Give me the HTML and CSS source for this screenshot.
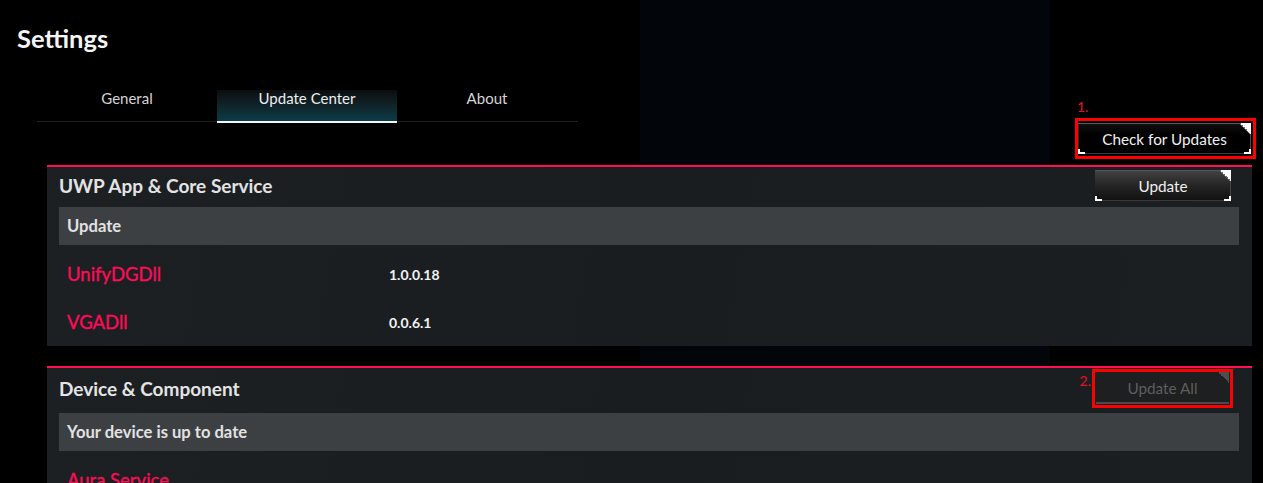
FILE: index.html
```html
<!DOCTYPE html>
<html lang="en">
<head>
<meta charset="utf-8">
<title>Settings</title>
<link rel="stylesheet" href="styles.css">
</head>
<body>
<div class="app">
  <header class="top">
    <div class="top-left">
      <h1 class="title">Settings</h1>
      <nav class="tabs">
        <div class="tab">General</div>
        <div class="tab active">Update Center</div>
        <div class="tab">About</div>
      </nav>
    </div>
    <div class="mark mark-1">
      <span class="mark-num">1.</span>
      <button class="btn btn-check">Check for Updates</button>
    </div>
  </header>

  <section class="panel">
    <div class="panel-head">
      <h2 class="panel-title">UWP App &amp; Core Service</h2>
      <button class="btn btn-grad">Update</button>
    </div>
    <div class="table-head">Update</div>
    <div class="rows">
      <div class="row"><span class="name">UnifyDGDll</span><span class="ver">1.0.0.18</span></div>
      <div class="row"><span class="name">VGADll</span><span class="ver">0.0.6.1</span></div>
    </div>
  </section>

  <section class="panel panel-2">
    <div class="panel-head panel-head-2">
      <h2 class="panel-title">Device &amp; Component</h2>
      <div class="mark mark-2">
        <span class="mark-num">2.</span>
        <button class="btn btn-disabled">Update All</button>
      </div>
    </div>
    <div class="table-head">Your device is up to date</div>
    <div class="rows">
      <div class="row"><span class="name">Aura Service</span><span class="ver"></span></div>
    </div>
  </section>
</div>
</body>
</html>
```

FILE: styles.css
```css
* { box-sizing: border-box; }
html, body { margin: 0; padding: 0; }
body {
  width: 1263px;
  height: 483px;
  overflow: hidden;
  background: linear-gradient(90deg, #000 0, #000 640px, #02060a 640px, #02060a 1050px, #000 1050px);
  font-family: "Lato", "Segoe UI", sans-serif;
  color: #e6e6e6;
}
.app { width: 1263px; }

.top {
  height: 165px;
  display: flex;
  justify-content: space-between;
  align-items: flex-end;
}
.top-left { padding-left: 17px; padding-top: 24px; align-self: flex-start; }
.title {
  margin: 0;
  font-size: 25.5px;
  line-height: 29px;
  font-weight: 700;
  color: #f4f4f4;
}
.tabs {
  margin-top: 37px;
  margin-left: 20px;
  width: 541px;
  height: 32px;
  display: flex;
  border-bottom: 1px solid #1e2124;
}
.tab {
  width: 180px;
  height: 31px;
  text-align: center;
  font-size: 15px;
  line-height: 17px;
  color: #d4d4d4;
}
.tab.active {
  color: #eeeeee;
  background: linear-gradient(to bottom, #0c0d0e 0%, #10262c 55%, #0a3d48 100%);
  border-bottom: 2px solid #f4f4f4;
  height: 33px;
}

.mark { position: relative; border: 3px solid #ff0000; }
.mark-num {
  position: absolute;
  font-size: 14px;
  line-height: 14px;
  color: #e8141c;
}
.mark-1 { margin-right: 7px; margin-bottom: 6px; padding: 2px 2px 2px 0; }
.mark-1 .mark-num { left: -1px; bottom: calc(100% + 7px); }
.mark-2 { padding: 0 1px 1px 1px; }
.mark-2 .mark-num { right: calc(100% + 4px); top: 2px; }

.btn {
  position: relative;
  display: block;
  border: 0;
  padding: 0;
  margin: 0;
  font-family: "Lato", "Segoe UI", sans-serif;
  font-size: 15.3px;
  color: #f0f0f0;
  cursor: pointer;
}
.btn::before {
  content: "";
  position: absolute;
  top: 0;
  right: 0;
  width: 11px;
  height: 11px;
  background: linear-gradient(to bottom left, #ffffff 50%, #6a6a6a 50%, #6a6a6a 58%, transparent 58%);
}
.btn::after {
  content: "";
  position: absolute;
  left: 0;
  right: 0;
  bottom: 0;
  height: 6px;
  background:
    linear-gradient(#fff, #fff) left bottom / 7px 2px no-repeat,
    linear-gradient(#fff, #fff) left bottom / 2px 5px no-repeat,
    linear-gradient(#fff, #fff) right bottom / 7px 2px no-repeat,
    linear-gradient(#fff, #fff) right bottom / 2px 5px no-repeat,
    linear-gradient(#3a3a3a, #3a3a3a) left bottom / 100% 1px no-repeat;
}
.btn-check {
  width: 173px;
  height: 31px;
  background: linear-gradient(#101010, #000 40%, #000);
  box-shadow: inset 0 1px 0 #5a5a5a, inset -1px 0 0 #4a4a4a, inset 1px 0 0 #2a2a2a;
}
.btn-grad {
  width: 136px;
  height: 31px;
  background: linear-gradient(#444 0%, #272727 45%, #101010 100%);
  box-shadow: inset 0 1px 0 #555, inset -1px 0 0 #444;
}
.btn-disabled {
  width: 133px;
  height: 32px;
  color: #5e5e5e;
  background: #1e1f20;
  cursor: default;
}
.btn-disabled::before {
  background: linear-gradient(to bottom left, #4e4e4e 50%, transparent 50%);
}
.btn-disabled::after {
  height: 2px;
  background: linear-gradient(#4a4a4a, #4a4a4a);
}

.panel {
  margin: 0 11px 0 47px;
  background: linear-gradient(100deg, #1d2023 0%, #1a1d20 50%, #1c1f22 100%);
  border-top: 2px solid #ff1053;
}
.panel-2 { margin-top: 20px; }
.panel-head {
  height: 34px;
  padding: 3px 21px 0 12px;
  margin-bottom: 6px;
  display: flex;
  justify-content: space-between;
  align-items: center;
}
.panel-head-2 {
  height: 40px;
  padding: 1px 19px 0 12px;
  margin-bottom: 5px;
}
.panel-title {
  margin: 0;
  font-size: 19px;
  font-weight: 700;
  color: #e4e4e4;
}
.table-head {
  margin: 0 13px 0 12px;
  height: 38px;
  padding-left: 8px;
  display: flex;
  align-items: center;
  background: #3d4043;
  font-size: 16.6px;
  font-weight: 700;
  color: #e2e2e2;
}
.rows { padding-top: 5px; }
.row {
  height: 48px;
  display: grid;
  grid-template-columns: 322px 1fr;
  align-items: center;
  padding-left: 20px;
}
.name {
  font-size: 18.5px;
  line-height: 22px;
  color: #ff0c58;
  -webkit-text-stroke: 0.3px #ff0c58;
}
.ver {
  font-size: 14px;
  font-weight: 700;
  color: #f2f2f2;
}
```
